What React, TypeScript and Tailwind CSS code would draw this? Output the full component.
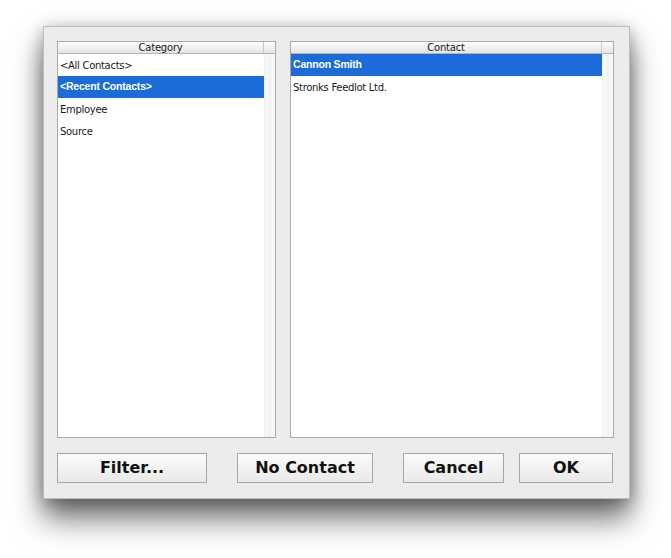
const font = { fontFamily: '"DejaVu Sans", "Lucida Grande", sans-serif' };
const boldFont = { fontFamily: '"Liberation Sans", Arial, sans-serif' };

function ListPanel({ title, items, selected, width }: { title: string; items: string[]; selected: number; width: string }) {
  return (
    <div className={`${width} h-[397px] flex flex-col border border-[#a9a9a9] bg-white`}>
      <div className="flex h-[12px] border-b border-[#b5b5b5] bg-gradient-to-b from-[#ffffff] to-[#e4e4e4]">
        <div className="flex-1 flex items-center justify-center text-[10px] leading-none tracking-[-0.2px] text-[#1a1a1a] border-r border-[#c8c8c8]">
          {title}
        </div>
        <div className="w-[11px]" />
      </div>
      <div className="flex flex-1">
        <div className="flex-1 flex flex-col">
          {items.map((item, i) =>
            i === selected ? (
              <div
                key={item}
                className="h-[22px] flex items-center pl-[2px] text-[10.5px] tracking-[-0.2px] bg-[#1b6cd9] text-white font-bold"
                style={boldFont}
              >
                {item}
              </div>
            ) : (
              <div key={item} className="h-[22px] flex items-center pl-[2px] text-[10px] tracking-[-0.3px] text-[#1a1a1a]">
                {item}
              </div>
            )
          )}
        </div>
        <div className="w-[11px] border-l border-[#efefef] bg-gradient-to-r from-[#fafafa] via-[#f2f2f2] to-[#fbfbfb]" />
      </div>
    </div>
  );
}

function Btn({ label, width, className = '' }: { label: string; width: string; className?: string }) {
  return (
    <button
      className={`${width} h-[30px] border border-[#a5a5a5] bg-gradient-to-b from-[#fbfbfb] to-[#e9e9e9] text-[16px] font-bold text-[#111] flex items-center justify-center ${className}`}
    >
      {label}
    </button>
  );
}

export default function App() {
  return (
    <div className="w-[671px] h-[558px] bg-white overflow-hidden" style={font}>
      <div className="ml-[43px] mt-[26px] w-[587px] h-[473px] bg-[#ececec] border border-[#bdbdbd] shadow-[0_20px_28px_rgba(0,0,0,0.55),0_3px_16px_rgba(0,0,0,0.3)] pl-[13px] pt-[14px] flex flex-col">
        <div className="flex gap-[14px]">
          <ListPanel
            title="Category"
            items={['<All Contacts>', '<Recent Contacts>', 'Employee', 'Source']}
            selected={1}
            width="w-[219px]"
          />
          <ListPanel
            title="Contact"
            items={['Cannon Smith', 'Stronks Feedlot Ltd.']}
            selected={0}
            width="w-[324px]"
          />
        </div>
        <div className="flex mt-[15px]">
          <Btn label="Filter..." width="w-[150px]" />
          <Btn label="No Contact" width="w-[136px]" className="ml-[30px]" />
          <Btn label="Cancel" width="w-[101px]" className="ml-[30px]" />
          <Btn label="OK" width="w-[94px]" className="ml-[15px]" />
        </div>
      </div>
    </div>
  );
}
